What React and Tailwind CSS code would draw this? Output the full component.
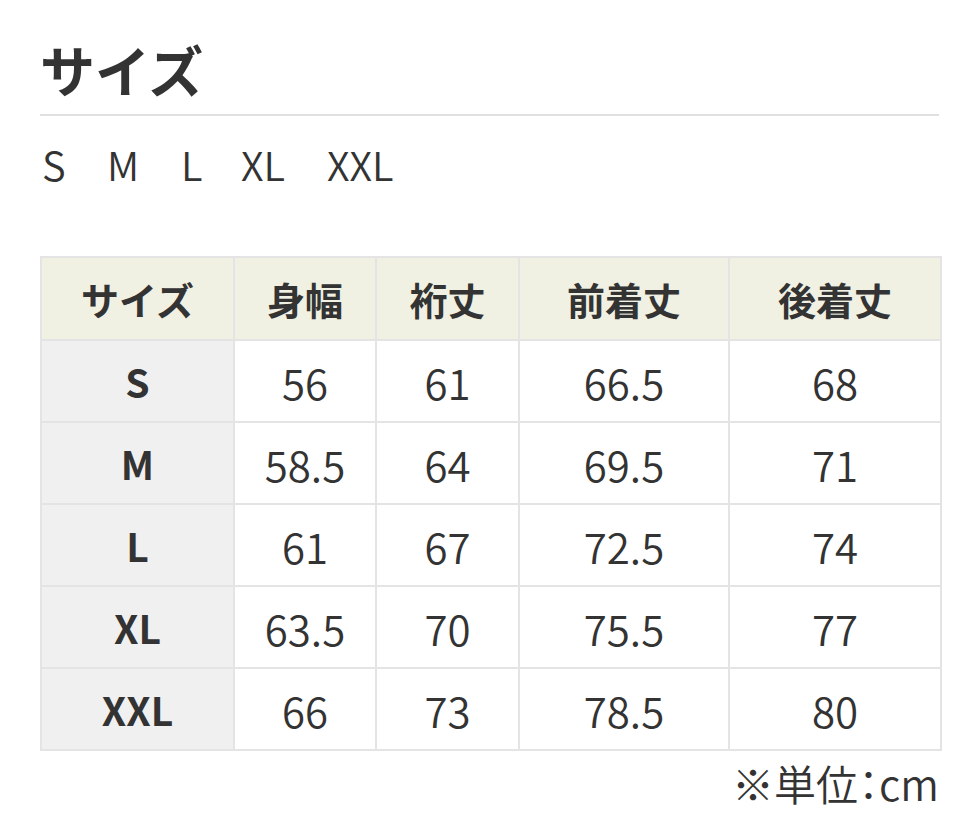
export default function App() {
  const rows = [
    ["S", "56", "61", "66.5", "68"],
    ["M", "58.5", "64", "69.5", "71"],
    ["L", "61", "67", "72.5", "74"],
    ["XL", "63.5", "70", "75.5", "77"],
    ["XXL", "66", "73", "78.5", "80"],
  ];
  const heads = ["サイズ", "身幅", "裄丈", "前着丈", "後着丈"];
  const widths = ["w-[193px]", "w-[142px]", "w-[143px]", "w-[210px]", "w-[212px]"];
  return (
    <div className="bg-white min-h-[821px] w-[979px] px-[40px] pt-[36px] text-[#333] font-['Noto_Sans_CJK_JP','Noto_Sans',sans-serif]">
      <h2 className="text-[55px] font-bold leading-[64px] pb-[14px] border-b-2 border-[#e0e0e0]">サイズ</h2>
      <div className="flex text-[40px] font-[350] leading-[60px] mt-[18px] pl-[2px]">
        <span className="w-[65px]">S</span>
        <span className="w-[74px]">M</span>
        <span className="w-[60px]">L</span>
        <span className="w-[86px]">XL</span>
        <span>XXL</span>
      </div>
      <table className="mt-[62px] border-collapse w-[900px] table-fixed">
        <thead>
          <tr className="h-[83px] bg-[#f0f0e3]">
            {heads.map((h, i) => (
              <th key={i} className={`${widths[i]} border-2 border-[#e4e4e4] text-[38px] font-bold text-center`}>{h}</th>
            ))}
          </tr>
        </thead>
        <tbody>
          {rows.map((r, ri) => (
            <tr key={ri} className="h-[82px]">
              {r.map((c, ci) => (
                <td
                  key={ci}
                  className={
                    ci === 0
                      ? "border-2 border-[#e4e4e4] bg-[#f0f0f0] text-[39px] font-bold text-center"
                      : "border-2 border-[#e4e4e4] bg-white text-[42px] font-[350] text-center"
                  }
                >
                  {c}
                </td>
              ))}
            </tr>
          ))}
        </tbody>
      </table>
      <div className="text-right text-[42px] font-[350] leading-[56px] mt-[4px] [font-feature-settings:'palt']">※単位：cm</div>
    </div>
  );
}
